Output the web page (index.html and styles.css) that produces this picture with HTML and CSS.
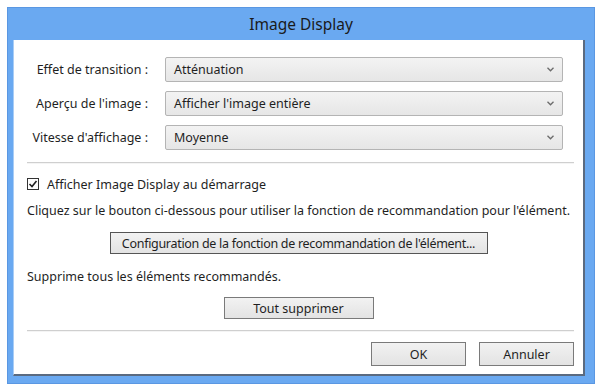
FILE: index.html
```html
<!DOCTYPE html>
<html lang="fr">
<head>
<meta charset="utf-8">
<title>Image Display</title>
<link rel="stylesheet" href="styles.css">
</head>
<body>
<div class="window">
  <div class="titlebar">Image Display</div>
  <div class="client">
    <div class="form">
      <label class="label">Effet de transition :</label>
      <div class="select"><span>Atténuation</span><svg class="chev" width="7" height="5" viewBox="0 0 7 5"><path d="M0.5 0.8 L3.5 3.8 L6.5 0.8" fill="none" stroke="#6b6b6b" stroke-width="1.3"/></svg></div>
      <label class="label">Aperçu de l'image :</label>
      <div class="select"><span>Afficher l'image entière</span><svg class="chev" width="7" height="5" viewBox="0 0 7 5"><path d="M0.5 0.8 L3.5 3.8 L6.5 0.8" fill="none" stroke="#6b6b6b" stroke-width="1.3"/></svg></div>
      <label class="label">Vitesse d'affichage :</label>
      <div class="select"><span>Moyenne</span><svg class="chev" width="7" height="5" viewBox="0 0 7 5"><path d="M0.5 0.8 L3.5 3.8 L6.5 0.8" fill="none" stroke="#6b6b6b" stroke-width="1.3"/></svg></div>
    </div>
    <div class="sep sep-top"></div>
    <div class="check-row">
      <span class="checkbox"><svg width="10" height="10" viewBox="0 0 10 10"><path d="M1.5 5 L4 7.5 L8.5 2" fill="none" stroke="#222" stroke-width="1.6"/></svg></span>
      <span>Afficher Image Display au démarrage</span>
    </div>
    <p class="text t1">Cliquez sur le bouton ci-dessous pour utiliser la fonction de recommandation pour l'élément.</p>
    <div class="center b1"><button class="btn btn-wide">Configuration de la fonction de recommandation de l'élément...</button></div>
    <p class="text t2">Supprime tous les éléments recommandés.</p>
    <div class="center b2"><button class="btn btn-mid">Tout supprimer</button></div>
    <div class="sep sep-bot"></div>
    <div class="actions">
      <button class="btn btn-small">OK</button>
      <button class="btn btn-small">Annuler</button>
    </div>
  </div>
</div>
</body>
</html>
```

FILE: styles.css
```css
html, body {
  margin: 0;
  padding: 0;
  background: #ffffff;
}
body {
  font-family: "Noto Sans", "Open Sans", sans-serif;
  font-size: 12.5px;
  color: #1f1f1f;
}
.window {
  margin: 7px 0 0 7px;
  width: 588px;
  height: 377px;
  box-sizing: border-box;
  background: #6aa9f1;
  border: 1px solid #5a97e2;
  display: flex;
  flex-direction: column;
}
.titlebar {
  height: 32px;
  line-height: 32px;
  text-align: center;
  font-size: 15.5px;
  color: #1a1a1a;
}
.client {
  margin: 0 9px 7px 5px;
  flex: 1;
  background: #ffffff;
  border-right: 2px solid #5a6a80;
  border-bottom: 2px solid #5a6a80;
  border-left: 1px solid #a9cdf6;
  display: flex;
  flex-direction: column;
  padding: 17px 0 0 0;
  box-sizing: border-box;
}
.form {
  display: grid;
  grid-template-columns: 134px 398px;
  column-gap: 17px;
  row-gap: 9px;
  align-items: center;
}
.label {
  text-align: right;
  white-space: nowrap;
}
.select {
  height: 25px;
  box-sizing: border-box;
  border: 1px solid #b4b4b4;
  border-radius: 2px;
  background: linear-gradient(#f3f3f3, #e6e6e6);
  display: flex;
  align-items: center;
  justify-content: space-between;
  padding: 0 8px 0 8px;
}
.chev {
  display: block;
}
.sep {
  height: 1px;
  background: #cfcfcf;
  border-bottom: 1px solid #f4f4f4;
  margin-left: 13px;
  margin-right: 9px;
}
.sep-top { margin-top: 12px; }
.check-row {
  margin-top: 12px;
  margin-left: 13px;
  height: 16px;
  display: flex;
  align-items: center;
  gap: 8px;
}
.checkbox {
  width: 12px;
  height: 12px;
  box-sizing: border-box;
  border: 1px solid #333;
  background: #fff;
  display: flex;
  align-items: center;
  justify-content: center;
}
.checkbox svg { display: block; }
.text {
  margin: 0 0 0 13px;
  line-height: 16px;
  white-space: nowrap;
}
.t1 { margin-top: 11px; }
.t2 { margin-top: 15px; }
.center {
  display: flex;
  justify-content: center;
}
.b1 { margin-top: 13px; }
.b2 { margin-top: 12px; }
.btn {
  font-family: inherit;
  font-size: inherit;
  color: #1f1f1f;
  box-sizing: border-box;
  border: 1px solid #7a7a7a;
  border-radius: 0;
  background: linear-gradient(#f2f2f2, #e3e3e3);
  padding: 0;
  margin: 0;
  white-space: nowrap;
}
.btn-wide { width: 378px; height: 22px; border-color: #555; letter-spacing: -0.3px; }
.btn-mid { width: 150px; height: 22px; }
.btn-small { width: 95px; height: 24px; }
.sep-bot { margin-top: 11px; }
.actions {
  margin-top: 10px;
  margin-right: 9px;
  display: flex;
  justify-content: flex-end;
  gap: 13px;
}
```
